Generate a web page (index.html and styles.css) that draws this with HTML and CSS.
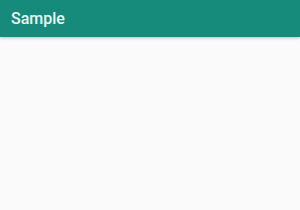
FILE: index.html
```html
<!DOCTYPE html>
<html lang="en">
<head>
    <meta charset="UTF-8">
    <meta name="viewport" content="width=device-width, initial-scale=1.0">
    <title>Sample</title>
    <link rel="stylesheet" href="styles.css">
</head>
<body>
    <header class="barra">
        <h1 class="titulo">Sample</h1>
    </header>
    <main class="contenido"></main>
</body>
</html>
```

FILE: styles.css
```css
body {
    margin: 0;
    font-family: Roboto, "Noto Sans", sans-serif;
    background-color: #fafafa;
    height: 210px;
}

.barra {
    background-color: #168a7b;
    height: 37px;
    display: flex;
    align-items: center;
    padding: 0 11px;
    box-shadow: 0 1px 3px rgba(0, 0, 0, 0.25);
}

.titulo {
    margin: 0;
    color: #eafaf6;
    font-size: 16px;
    font-weight: 500;
}
```
